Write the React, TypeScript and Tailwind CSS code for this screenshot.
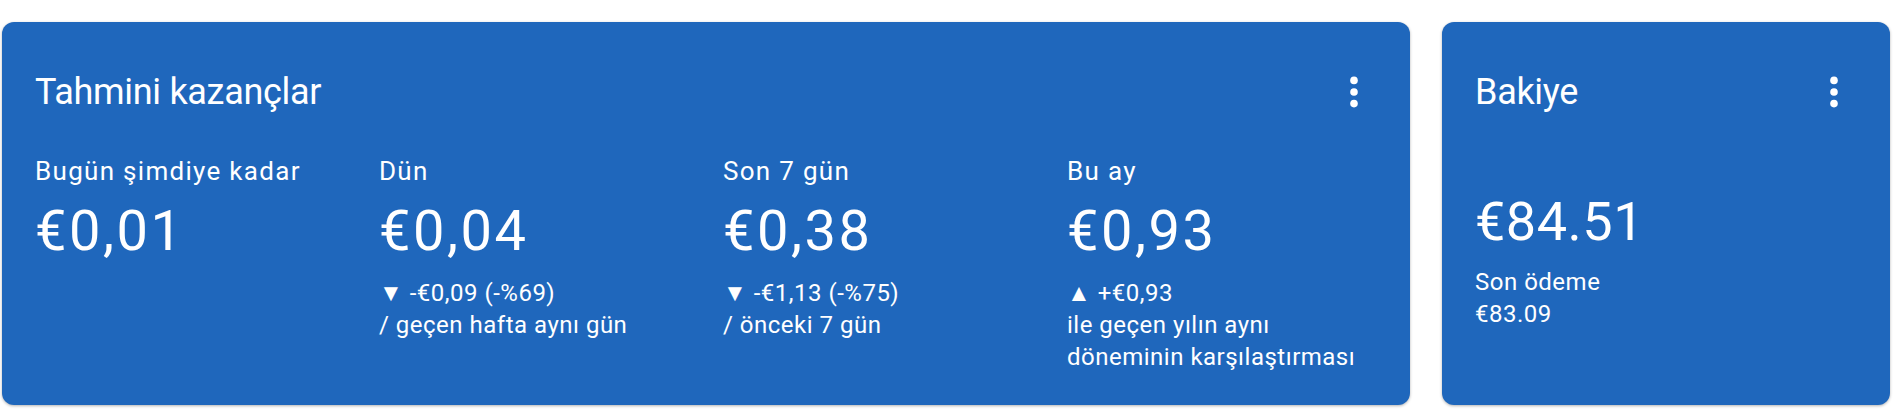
const stats = [
  { label: 'Bugün şimdiye kadar', value: '€0,01', lines: [] as string[] },
  { label: 'Dün', value: '€0,04', lines: ['▼ -€0,09 (-%69)', '/ geçen hafta aynı gün'] },
  { label: 'Son 7 gün', value: '€0,38', lines: ['▼ -€1,13 (-%75)', '/ önceki 7 gün'] },
  { label: 'Bu ay', value: '€0,93', lines: ['▲ +€0,93', 'ile geçen yılın aynı', 'döneminin karşılaştırması'] },
];

function MoreButton() {
  return (
    <button className="flex h-12 w-12 items-center justify-center text-white">
      <svg viewBox="0 0 24 24" className="h-12 w-12" fill="currentColor">
        <circle cx="12" cy="6.2" r="1.9" />
        <circle cx="12" cy="12" r="1.9" />
        <circle cx="12" cy="17.8" r="1.9" />
      </svg>
    </button>
  );
}

export default function App() {
  return (
    <div className="flex h-[410px] w-[1894px] gap-8 bg-white pl-[2px] pt-[22px] font-['Roboto',sans-serif] text-white">
      <section className="h-[383px] w-[1408px] rounded-xl bg-[#1f67bc] pl-[33px] pr-8 pt-[46px] shadow-[0_1px_3px_rgba(0,0,0,0.3)]">
        <div className="flex h-12 items-center justify-between">
          <h2 className="text-[36px] leading-[44px] tracking-[-0.3px]">Tahmini kazançlar</h2>
          <MoreButton />
        </div>
        <div className="mt-[39px] flex">
          {stats.map((s) => (
            <div key={s.label} className="w-[344px] shrink-0">
              <div className="text-[26px] leading-8 tracking-[1.3px]">{s.label}</div>
              <div className="mt-3 text-[56px] leading-[64px] tracking-[2.5px]">{s.value}</div>
              <div className="mt-[14px] text-[24px] leading-8 tracking-[0.5px]">
                {s.lines.map((l) => (
                  <div key={l}>{l}</div>
                ))}
              </div>
            </div>
          ))}
        </div>
      </section>
      <section className="h-[383px] w-[448px] rounded-xl bg-[#1f67bc] pl-[33px] pr-8 pt-[46px] shadow-[0_1px_3px_rgba(0,0,0,0.3)]">
        <div className="flex h-12 items-center justify-between">
          <h2 className="text-[36px] leading-[44px] tracking-[-0.3px]">Bakiye</h2>
          <MoreButton />
        </div>
        <div className="mt-[74px] text-[54px] leading-[64px] tracking-[0.5px]">€84.51</div>
        <div className="mt-3 text-[24px] leading-8 tracking-[0.5px]">
          <div>Son ödeme</div>
          <div>€83.09</div>
        </div>
      </section>
    </div>
  );
}
